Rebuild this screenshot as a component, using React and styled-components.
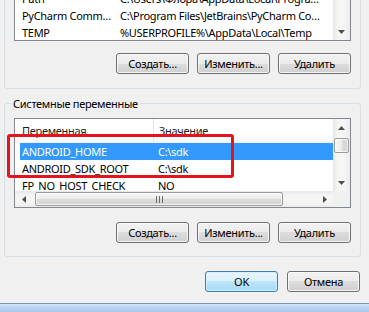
import React from "react";
import styled, { createGlobalStyle } from "styled-components";

const GlobalStyle = createGlobalStyle`
  html, body { margin: 0; padding: 0; background: #f0f0f0; }
  body {
    font-family: "Noto Sans", "Segoe UI", sans-serif;
    font-size: 11px;
    letter-spacing: -0.3px;
    color: #000;
  }
  * { box-sizing: border-box; }
`;

const Window = styled.div`
  width: 369px;
  height: 312px;
  overflow: hidden;
  display: flex;
  flex-direction: column;
  background: #f0f0f0;
`;

const Group = styled.div`
  margin: -50px 0 0 4px;
  width: 357px;
  flex: none;
  border: 1px solid #d5dfe5;
  border-radius: 3px;
  padding: 14px 9px 14px;
  display: flex;
  flex-direction: column;
  gap: 12px;
`;

const Fieldset = styled.fieldset`
  margin: 7px 0 0 4px;
  width: 357px;
  min-width: 0;
  flex: none;
  border: 1px solid #d5dfe5;
  border-radius: 3px;
  padding: 7px 9px 13px;
  display: flex;
  flex-direction: column;
  gap: 14px;
`;

const Legend = styled.legend`
  padding: 0 2px;
  margin-left: -3px;
  line-height: 15px;
  color: #000;
`;

const ListWrap = styled.div`
  position: relative;
`;

const ListBox = styled.div`
  height: ${(p) => p.$h}px;
  border: 1px solid #828790;
  background: #fff;
  display: grid;
  grid-template-columns: minmax(0, 1fr) 17px;
  grid-template-rows: ${(p) => (p.$hscroll ? "minmax(0, 1fr) 16px" : "minmax(0, 1fr)")};
  overflow: hidden;
`;

const ListMain = styled.div`
  display: flex;
  flex-direction: column;
  overflow: hidden;
  min-width: 0;
`;

const Header = styled.div`
  height: 24px;
  flex: none;
  display: flex;
  background: linear-gradient(#ffffff 0%, #ffffff 55%, #f6f7f9 100%);
  border-bottom: 1px solid #eef0f3;
`;

const HeaderCell = styled.div`
  width: ${(p) => p.$w}px;
  flex: none;
  display: flex;
  align-items: center;
  padding-left: ${(p) => p.$pl}px;
  border-right: ${(p) => (p.$last ? "none" : "1px solid #e3e5e8")};
  color: #1e1e1e;
  white-space: nowrap;
`;

const Rows = styled.div`
  flex: 1;
  min-height: 0;
  overflow: hidden;
  display: flex;
  flex-direction: column;
`;

const Row = styled.div`
  height: 17px;
  flex: none;
  display: flex;
  align-items: center;
  margin-left: 5px;
  background: ${(p) => (p.$selected ? "#3399ff" : "transparent")};
  color: ${(p) => (p.$selected ? "#ffffff" : "#000000")};
`;

const Cell = styled.div`
  width: ${(p) => p.$w}px;
  flex: none;
  padding-left: ${(p) => p.$pl}px;
  white-space: nowrap;
  overflow: hidden;
  text-overflow: ellipsis;
`;

const VScroll = styled.div`
  display: flex;
  flex-direction: column;
  background: linear-gradient(to right, #e6e6e6 0%, #f4f4f4 25%, #f7f7f7 60%, #ececec 100%);
  overflow: hidden;
`;

const HScroll = styled.div`
  display: flex;
  background: linear-gradient(#e6e6e6 0%, #f4f4f4 25%, #f7f7f7 60%, #ececec 100%);
  overflow: hidden;
`;

const ArrowBox = styled.div`
  flex: none;
  width: ${(p) => (p.$horizontal ? "17px" : "auto")};
  height: ${(p) => (p.$horizontal ? "auto" : "17px")};
  display: flex;
  align-items: center;
  justify-content: center;
`;

const Track = styled.div`
  flex: 1;
  min-width: 0;
  min-height: 0;
  display: flex;
  flex-direction: ${(p) => (p.$horizontal ? "row" : "column")};
  align-items: stretch;
`;

const Thumb = styled.div`
  flex: none;
  ${(p) =>
    p.$horizontal
      ? `margin: 1px 0 1px ${p.$offset}px; width: ${p.$size}px;`
      : `margin: ${p.$offset}px 1px 0; height: ${p.$size}px;`}
  border: 1px solid #9b9b9b;
  border-radius: 2px;
  background: ${(p) =>
    p.$horizontal
      ? "linear-gradient(#f6f6f6 0%, #ececec 50%, #dcdcdc 50%, #d4d4d4 100%)"
      : "linear-gradient(to right, #f6f6f6 0%, #ececec 50%, #dcdcdc 50%, #d4d4d4 100%)"};
  box-shadow: inset 0 0 0 1px rgba(255, 255, 255, 0.7);
  display: flex;
  align-items: center;
  justify-content: center;
`;

const Corner = styled.div`
  background: #f0f0f0;
`;

const ButtonRow = styled.div`
  display: flex;
  justify-content: flex-end;
  gap: ${(p) => p.$gap}px;
  padding-right: ${(p) => p.$pr || 0}px;
  margin-top: ${(p) => p.$mt || 0}px;
  flex: none;
`;

const Button = styled.button`
  width: 73px;
  height: 21px;
  padding: 0;
  font: inherit;
  letter-spacing: inherit;
  color: #000;
  border: 1px solid ${(p) => (p.$primary ? "#3c7fb1" : "#707070")};
  border-radius: 3px;
  background: ${(p) =>
    p.$primary
      ? "linear-gradient(#eaf6fd 0%, #d9f0fc 50%, #bee6fd 50%, #a7d9f5 100%)"
      : "linear-gradient(#f2f2f2 0%, #ebebeb 50%, #dddddd 50%, #cfcfcf 100%)"};
  box-shadow: inset 0 0 0 1px ${(p) => (p.$primary ? "rgba(210,240,255,0.9)" : "rgba(252,252,252,0.85)")};
`;

const Highlight = styled.div`
  position: absolute;
  left: -7px;
  top: 16px;
  width: 227px;
  height: 44px;
  border: 3px solid #e3141c;
  border-radius: 3px;
  pointer-events: none;
`;

const Frame = styled.div`
  margin-top: auto;
  height: 9px;
  flex: none;
  border-top: 1px solid #7d93ad;
  background: linear-gradient(#d4e5f8 0%, #bcd5f1 40%, #a9c8ec 100%);
`;

const Arrow = ({ dir }) => {
  const pts = {
    up: "0,4 3.5,0 7,4",
    down: "0,0 7,0 3.5,4",
    left: "4,0 4,7 0,3.5",
    right: "0,0 0,7 4,3.5",
  }[dir];
  const horiz = dir === "left" || dir === "right";
  return (
    <svg width={horiz ? 4 : 7} height={horiz ? 7 : 4} viewBox={horiz ? "0 0 4 7" : "0 0 7 4"}>
      <polygon points={pts} fill="#4f4f4f" />
    </svg>
  );
};

const Grip = () => (
  <svg width="7" height="7" viewBox="0 0 7 7">
    <rect x="0" y="0" width="1" height="7" fill="#6a6a6a" />
    <rect x="3" y="0" width="1" height="7" fill="#6a6a6a" />
    <rect x="6" y="0" width="1" height="7" fill="#6a6a6a" />
  </svg>
);

const VerticalBar = ({ thumbOffset, thumbSize }) => (
  <VScroll>
    <ArrowBox>
      <Arrow dir="up" />
    </ArrowBox>
    <Track>
      <Thumb $offset={thumbOffset} $size={thumbSize} />
    </Track>
    <ArrowBox>
      <Arrow dir="down" />
    </ArrowBox>
  </VScroll>
);

const HorizontalBar = ({ thumbOffset, thumbSize }) => (
  <HScroll>
    <ArrowBox $horizontal>
      <Arrow dir="left" />
    </ArrowBox>
    <Track $horizontal>
      <Thumb $horizontal $offset={thumbOffset} $size={thumbSize}>
        <Grip />
      </Thumb>
    </Track>
    <ArrowBox $horizontal>
      <Arrow dir="right" />
    </ArrowBox>
  </HScroll>
);

const userVars = [
  ["Path", "C:\\Users\\Флора\\AppData\\Local\\Progra…"],
  ["PyCharm Comm…", "C:\\Program Files\\JetBrains\\PyCharm Co…"],
  ["TEMP", "%USERPROFILE%\\AppData\\Local\\Temp"],
];

const systemVars = [
  ["ANDROID_HOME", "C:\\sdk", true],
  ["ANDROID_SDK_ROOT", "C:\\sdk", false],
  ["FP_NO_HOST_CHECK", "NO", false],
];

export default function App() {
  return (
    <>
      <GlobalStyle />
      <Window>
        <Group>
          <ListBox $h={76}>
            <ListMain>
              <Header>
                <HeaderCell $w={101} $pl={7}>Переменная</HeaderCell>
                <HeaderCell $w={200} $pl={5} $last>Значение</HeaderCell>
              </Header>
              <Rows>
                {userVars.map(([name, value]) => (
                  <Row key={name}>
                    <Cell $w={95} $pl={2}>{name}</Cell>
                    <Cell $w={216} $pl={5}>{value}</Cell>
                  </Row>
                ))}
              </Rows>
            </ListMain>
            <VerticalBar thumbOffset={2} thumbSize={15} />
          </ListBox>
          <ButtonRow $gap={8}>
            <Button>Создать...</Button>
            <Button>Изменить...</Button>
            <Button>Удалить</Button>
          </ButtonRow>
        </Group>

        <Fieldset>
          <Legend>Системные переменные</Legend>
          <ListWrap>
            <ListBox $h={90} $hscroll>
              <ListMain>
                <Header>
                  <HeaderCell $w={139} $pl={7}>Переменная</HeaderCell>
                  <HeaderCell $w={180} $pl={5} $last>Значение</HeaderCell>
                </Header>
                <Rows>
                  {systemVars.map(([name, value, selected]) => (
                    <Row key={name} $selected={selected}>
                      <Cell $w={133} $pl={2}>{name}</Cell>
                      <Cell $w={170} $pl={5}>{value}</Cell>
                    </Row>
                  ))}
                </Rows>
              </ListMain>
              <VerticalBar thumbOffset={2} thumbSize={15} />
              <HorizontalBar thumbOffset={3} thumbSize={248} />
              <Corner />
            </ListBox>
            <Highlight />
          </ListWrap>
          <ButtonRow $gap={8}>
            <Button>Создать...</Button>
            <Button>Изменить...</Button>
            <Button>Удалить</Button>
          </ButtonRow>
        </Fieldset>

        <ButtonRow $gap={9} $pr={9} $mt={14}>
          <Button $primary>OK</Button>
          <Button>Отмена</Button>
        </ButtonRow>

        <Frame />
      </Window>
    </>
  );
}
